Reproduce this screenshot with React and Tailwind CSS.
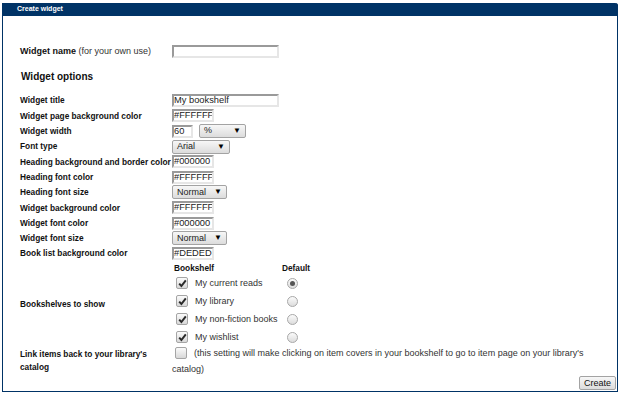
import React from "react";

function TextBox({ value, width }) {
  return (
    <div
      className={`${width} h-[13px] overflow-hidden whitespace-nowrap border-2 border-t-[#9a9a9a] border-l-[#9a9a9a] border-r-[#e6e6e6] border-b-[#e6e6e6] bg-white text-[9.3px] leading-[9px] text-[#222]`}
    >
      {value}
    </div>
  );
}

function SelectBox({ value, width }) {
  return (
    <div
      className={`${width} h-[14px] flex items-center justify-between rounded-[2px] border border-[#a3a3a3] bg-gradient-to-b from-[#f7f7f7] to-[#dcdcdc] pl-[4px] pr-[4px] text-[9px] text-[#222]`}
    >
      <span>{value}</span>
      <span className="text-[8px] text-black">▼</span>
    </div>
  );
}

function CheckBox({ checked }) {
  return (
    <span className="inline-flex w-[12px] h-[12px] items-center justify-center rounded-[2px] border border-[#a5a5a5] bg-gradient-to-b from-[#fbfbfb] to-[#d8d8d8]">
      {checked && (
        <svg width="9" height="9" viewBox="0 0 9 9">
          <path d="M1.2 4.6 L3.4 7 L7.8 1.4" fill="none" stroke="#2a2a2a" strokeWidth="2" />
        </svg>
      )}
    </span>
  );
}

function Radio({ selected }) {
  return (
    <span className="inline-flex w-[11px] h-[11px] items-center justify-center rounded-full border border-[#a8a8a8] bg-gradient-to-b from-[#fbfbfb] to-[#dcdcdc]">
      {selected && <span className="w-[5px] h-[5px] rounded-full bg-[#555]" />}
    </span>
  );
}

const options = [
  { label: "Widget title", control: <TextBox value="My bookshelf" width="w-[107px]" /> },
  { label: "Widget page background color", control: <TextBox value="#FFFFFF" width="w-[42px]" /> },
  {
    label: "Widget width",
    control: (
      <div className="flex items-center gap-[6px]">
        <TextBox value="60" width="w-[21px]" />
        <SelectBox value="%" width="w-[47px]" />
      </div>
    ),
  },
  { label: "Font type", control: <SelectBox value="Arial" width="w-[58px]" /> },
  { label: "Heading background and border color", control: <TextBox value="#000000" width="w-[42px]" /> },
  { label: "Heading font color", control: <TextBox value="#FFFFFF" width="w-[42px]" /> },
  { label: "Heading font size", control: <SelectBox value="Normal" width="w-[55px]" /> },
  { label: "Widget background color", control: <TextBox value="#FFFFFF" width="w-[42px]" /> },
  { label: "Widget font color", control: <TextBox value="#000000" width="w-[42px]" /> },
  { label: "Widget font size", control: <SelectBox value="Normal" width="w-[55px]" /> },
  { label: "Book list background color", control: <TextBox value="#DEDEDE" width="w-[42px]" /> },
];

const shelves = [
  { name: "My current reads", isDefault: true },
  { name: "My library", isDefault: false },
  { name: "My non-fiction books", isDefault: false },
  { name: "My wishlist", isDefault: false },
];

export default function App() {
  return (
    <div className="w-[624px] h-[397px] bg-white font-['Liberation_Sans',Arial,sans-serif] pl-[2px] pt-[3px]">
      <div className="w-[616px] h-[389px] flex flex-col border border-t-0 border-[#003366] rounded-tr-[3px]">
        {/* Header */}
        <div className="h-[13px] -mx-px bg-[#003366] rounded-tr-[3px] flex items-center pl-[15px] text-[7px] font-bold text-white">
          Create widget
        </div>

        <div className="flex-1 flex flex-col pl-[17px]">
          {/* Widget name */}
          <div className="mt-[29px] flex items-center h-[13px]">
            <div className="w-[152px] text-[9px] text-[#333]">
              <span className="font-bold text-[#111]">Widget name</span> (for your own use)
            </div>
            <TextBox value="" width="w-[107px]" />
          </div>

          <div className="mt-[12px] h-[12px] flex items-center pl-[1px] text-[10px] font-bold text-[#111]">
            Widget options
          </div>

          {/* Options */}
          <div className="mt-[11px] flex flex-col">
            {options.map((o) => (
              <div key={o.label} className="h-[15.3px] flex items-center">
                <div className="w-[152px] whitespace-nowrap text-[8.3px] font-bold text-[#111]">{o.label}</div>
                {o.control}
              </div>
            ))}
          </div>

          {/* Bookshelves */}
          <div className="mt-[1px] flex items-center">
            <div className="w-[152px] text-[8.3px] font-bold text-[#111]">Bookshelves to show</div>
            <div className="flex flex-col">
              <div className="h-[12px] flex items-center text-[8.3px] font-bold text-[#111]">
                <span className="w-[110px] pl-[2px]">Bookshelf</span>
                <span>Default</span>
              </div>
              {shelves.map((s) => (
                <div key={s.name} className="h-[18px] flex items-center text-[9px] text-[#333]">
                  <div className="w-[115px] flex items-center gap-[7px] pl-[4px]">
                    <CheckBox checked />
                    <span>{s.name}</span>
                  </div>
                  <Radio selected={s.isDefault} />
                </div>
              ))}
            </div>
          </div>

          {/* Link items */}
          <div className="mt-[1px] flex items-start">
            <div className="w-[152px] pt-[1px] text-[8.3px] leading-[13px] font-bold text-[#111]">
              Link items back to your library's
              <br />
              catalog
            </div>
            <div className="flex-1 pr-[6px] text-[9px] leading-[12.5px] text-[#333]">
              <span className="inline-block align-[-3px] ml-[3px] mr-[7px]">
                <CheckBox checked={false} />
              </span>
              (this setting will make clicking on item covers in your bookshelf to go to item page on your library's catalog)
            </div>
          </div>

          <div className="flex justify-end pr-[1px] mt-[1px]">
            <button className="h-[14px] w-[37px] rounded-[2px] border border-[#a3a3a3] bg-gradient-to-b from-[#f7f7f7] to-[#dcdcdc] text-[9px] leading-[12px] text-[#111]">
              Create
            </button>
          </div>
        </div>
      </div>
    </div>
  );
}
